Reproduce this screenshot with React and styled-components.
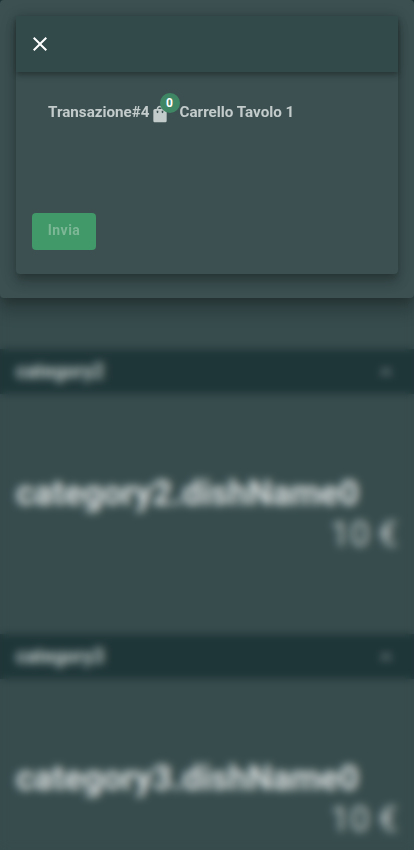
import React from "react";
import styled, { createGlobalStyle } from "styled-components";
import { MdClose, MdShoppingBag, MdExpandLess } from "react-icons/md";

const GlobalStyle = createGlobalStyle`
  *, *::before, *::after { box-sizing: border-box; }
  html, body { margin: 0; height: 100%; overflow: hidden; background: #374c4d; }
  body { font-family: Roboto, sans-serif; color: #c3cbcb; }
`;

const Screen = styled.div`
  position: relative;
  width: 100%;
  height: 850px;
  overflow: hidden;
  background: #374c4d;
`;

const Menu = styled.main`
  display: flex;
  flex-direction: column;
`;

const Scrim = styled.div`
  position: absolute;
  inset: 0;
  backdrop-filter: blur(4px);
`;

const AppBar = styled.header`
  height: 64px;
  background: #1f3638;
`;

const Category = styled.section`
  height: 285px;
`;

const CategoryBar = styled.div`
  display: flex;
  align-items: center;
  justify-content: space-between;
  height: 45px;
  padding: 0 16px 1px;
  background: #1f3638;
`;

const CategoryName = styled.span`
  font-size: 19.5px;
  font-weight: 700;
`;

const Chevron = styled(MdExpandLess)`
  width: 20px;
  height: 20px;
  margin: 2px 2px 0 0;
  color: #c3cbcb;
`;

const Dish = styled.div`
  display: flex;
  flex-direction: column;
  padding: 78px 16px 0;
`;

const DishName = styled.span`
  color: #dde1e1;
  font-size: 34.5px;
  font-weight: 700;
  line-height: 42px;
  white-space: nowrap;
`;

const Price = styled.span`
  align-self: flex-end;
  font-size: 35px;
  line-height: 42px;
`;

const Dialog = styled.div`
  position: absolute;
  top: 0;
  left: 0;
  right: 0;
  height: 298px;
  padding: 16px 16px 24px;
  border-radius: 4px;
  background: #3c5051;
  box-shadow: 0 7px 8px -4px rgba(0, 0, 0, 0.2), 0 12px 17px 2px rgba(0, 0, 0, 0.14),
    0 5px 22px 4px rgba(0, 0, 0, 0.12);
`;

const Card = styled.div`
  display: flex;
  flex-direction: column;
  height: 258px;
  border-radius: 4px;
  background: #3c5051;
  box-shadow: 0 5px 6px -3px rgba(0, 0, 0, 0.2), 0 9px 12px 1px rgba(0, 0, 0, 0.14),
    0 3px 16px 2px rgba(0, 0, 0, 0.12);
`;

const CardBar = styled.div`
  display: flex;
  align-items: center;
  height: 56px;
  padding-left: 12px;
  background: #334a4a;
  box-shadow: 0 2px 4px -1px rgba(0, 0, 0, 0.2), 0 4px 5px rgba(0, 0, 0, 0.14),
    0 1px 10px rgba(0, 0, 0, 0.12);
`;

const CloseButton = styled.button`
  display: flex;
  padding: 0;
  margin: 0;
  border: 0;
  background: none;
  color: #fff;
  font-size: 24px;
`;

const CartRow = styled.div`
  display: flex;
  align-items: center;
  height: 80px;
  padding-left: 32px;
  font-size: 15.2px;
  font-weight: 700;
  white-space: nowrap;
`;

const BagHolder = styled.span`
  position: relative;
  display: flex;
  width: 30px;
  padding-top: 3px;
  font-size: 20px;
`;

const CountBadge = styled.span`
  position: absolute;
  top: -7.5px;
  left: 10px;
  width: 20px;
  height: 20px;
  border-radius: 50%;
  background: #3f8764;
  color: #fff;
  font-size: 12px;
  font-weight: 700;
  line-height: 20px;
  text-align: center;
`;

const SendButton = styled.button`
  width: 64px;
  height: 37px;
  margin: auto 0 24px 16px;
  padding: 0 0 2.5px;
  border: 0;
  border-radius: 4px;
  background: #419868;
  color: #7cb796;
  font: 700 14px Roboto, sans-serif;
  letter-spacing: 0.5px;
`;

const categories = ["category1", "category2", "category3"];

export default function App() {
  return (
    <Screen>
      <GlobalStyle />
      <Menu>
        <AppBar />
        {categories.map((name) => (
          <Category key={name}>
            <CategoryBar>
              <CategoryName>{name}</CategoryName>
              <Chevron />
            </CategoryBar>
            <Dish>
              <DishName>{name}.dishName0</DishName>
              <Price>10 €</Price>
            </Dish>
          </Category>
        ))}
      </Menu>
      <Scrim />
      <Dialog role="dialog">
        <Card>
          <CardBar>
            <CloseButton aria-label="Chiudi">
              <MdClose />
            </CloseButton>
          </CardBar>
          <CartRow>
            <span>Transazione#4</span>
            <BagHolder>
              <MdShoppingBag />
              <CountBadge>0</CountBadge>
            </BagHolder>
            <span>Carrello Tavolo 1</span>
          </CartRow>
          <SendButton disabled>Invia</SendButton>
        </Card>
      </Dialog>
    </Screen>
  );
}
